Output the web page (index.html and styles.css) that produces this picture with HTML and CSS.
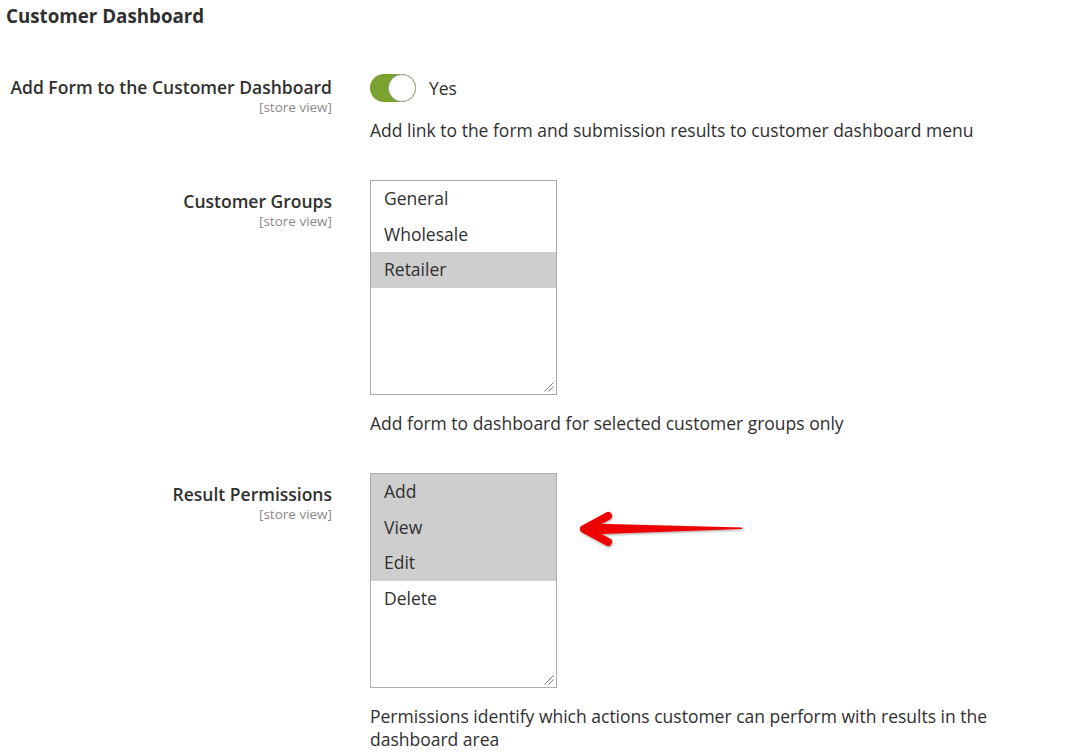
FILE: index.html
```html
<!DOCTYPE html>
<html lang="en">
<head>
<meta charset="utf-8">
<title>Customer Dashboard</title>
<link rel="stylesheet" href="styles.css">
</head>
<body>
<div class="page">
  <h2 class="section-title">Customer Dashboard</h2>

  <div class="form">
    <div class="row row-toggle">
      <div class="label-col">
        <div class="label">Add Form to the Customer Dashboard</div>
        <div class="scope">[store view]</div>
      </div>
      <div class="control-col">
        <div class="toggle-line">
          <span class="toggle"><span class="knob"></span></span>
          <span class="toggle-text">Yes</span>
        </div>
        <p class="note">Add link to the form and submission results to customer dashboard menu</p>
      </div>
    </div>

    <div class="row row-select">
      <div class="label-col">
        <div class="label">Customer Groups</div>
        <div class="scope">[store view]</div>
      </div>
      <div class="control-col">
        <div class="multiselect ms-blue">
          <div class="opt">General</div>
          <div class="opt">Wholesale</div>
          <div class="opt selected">Retailer</div>
          <svg class="grip" width="10" height="10" viewBox="0 0 10 10"><path d="M9.5 0.5 L0.5 9.5 M9.5 4.5 L4.5 9.5" stroke="#7a7a7a" stroke-width="1"/></svg>
        </div>
        <p class="note">Add form to dashboard for selected customer groups only</p>
      </div>
    </div>

    <div class="row row-select">
      <div class="label-col">
        <div class="label">Result Permissions</div>
        <div class="scope">[store view]</div>
      </div>
      <div class="control-col">
        <div class="multiselect">
          <div class="opt selected">Add</div>
          <div class="opt selected">View</div>
          <div class="opt selected">Edit</div>
          <div class="opt">Delete</div>
          <svg class="grip" width="10" height="10" viewBox="0 0 10 10"><path d="M9.5 0.5 L0.5 9.5 M9.5 4.5 L4.5 9.5" stroke="#7a7a7a" stroke-width="1"/></svg>
        </div>
        <p class="note">Permissions identify which actions customer can perform with results in the dashboard area</p>
      </div>
    </div>
  </div>

  <svg class="arrow" width="176" height="44" viewBox="0 0 176 44">
    <defs>
      <filter id="sh" x="-10%" y="-30%" width="120%" height="160%">
        <feDropShadow dx="0.5" dy="1.2" stdDeviation="0.8" flood-color="#000" flood-opacity="0.35"/>
      </filter>
    </defs>
    <g filter="url(#sh)">
      <polygon points="14,15.5 167,19.6 167,21 14,26.5" fill="#ee0000"/>
      <polyline points="33,8 9,21 33,34" fill="none" stroke="#ee0000" stroke-width="8" stroke-linecap="round" stroke-linejoin="round"/>
    </g>
  </svg>
</div>
</body>
</html>
```

FILE: styles.css
```css
* { box-sizing: border-box; }

body {
  margin: 0;
  background: #ffffff;
  color: #303030;
  font-family: "Open Sans", "Noto Sans", sans-serif;
}

.page {
  position: relative;
  width: 1083px;
  min-height: 753px;
}

.section-title {
  margin: 0;
  padding: 4px 0 0 6px;
  font-size: 18.75px;
  line-height: 24px;
  font-weight: 700;
  color: #303030;
}

.form {
  margin-top: 46px;
  display: flex;
  flex-direction: column;
  gap: 38px;
}

.row {
  display: grid;
  grid-template-columns: 332px 640px;
  column-gap: 38px;
}

.label-col {
  text-align: right;
}

.label {
  font-size: 17.5px;
  line-height: 22px;
  font-weight: 600;
  color: #303030;
}

.row-toggle .label-col { padding-top: 2px; }
.row-select .label-col { padding-top: 10px; }

.scope {
  font-size: 13.5px;
  line-height: 16px;
  color: #8a8a8a;
  margin-top: 1px;
}

.toggle-line {
  display: flex;
  align-items: center;
  gap: 13px;
  height: 28px;
}

.toggle {
  position: relative;
  display: block;
  width: 46px;
  height: 28px;
  border-radius: 14px;
  background: #79a22e;
}

.knob {
  position: absolute;
  right: 0;
  top: 0;
  width: 28px;
  height: 28px;
  border-radius: 50%;
  background: #ffffff;
  border: 1px solid #a8a8a8;
}

.toggle-text {
  font-size: 17.5px;
  line-height: 22px;
  color: #303030;
}

.note {
  margin: 17px 0 0 0;
  font-size: 17.5px;
  line-height: 23px;
  color: #303030;
}

.multiselect {
  position: relative;
  width: 187px;
  height: 215px;
  border: 1px solid #adadad;
  background: #ffffff;
}

.ms-blue { border-color: #a4abb3; }

.opt {
  height: 35.5px;
  line-height: 35.5px;
  padding-left: 13px;
  font-size: 17.5px;
  color: #303030;
}

.opt.selected { background: #cecece; }

.grip {
  position: absolute;
  right: 2px;
  bottom: 2px;
}

.arrow {
  position: absolute;
  left: 575px;
  top: 508px;
}
```
